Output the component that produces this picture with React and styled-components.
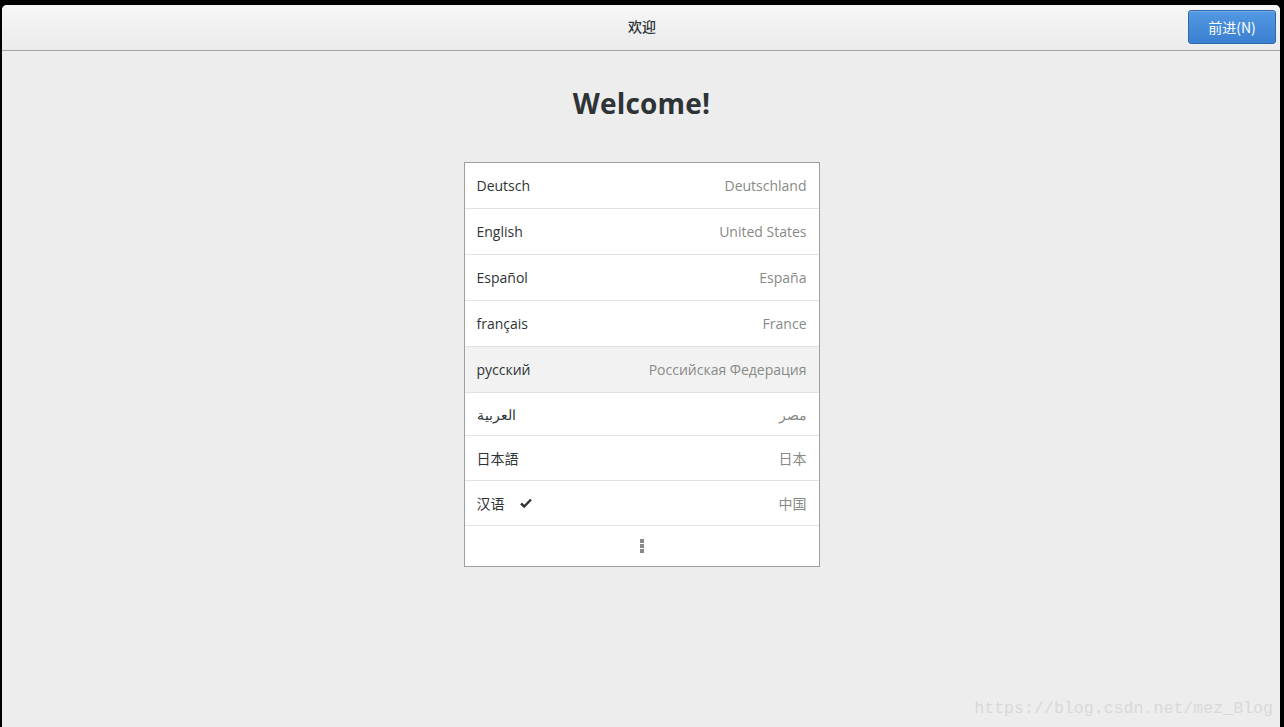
import React from "react";
import styled, { createGlobalStyle } from "styled-components";

const GlobalStyle = createGlobalStyle`
  html, body {
    margin: 0;
    padding: 0;
    background: #000;
  }
  body {
    font-family: "Open Sans", "Noto Sans", "Noto Sans CJK SC", sans-serif;
  }
`;

const Screen = styled.div`
  width: 1284px;
  height: 727px;
  background: #000;
  padding: 5px 4px 0 2px;
  box-sizing: border-box;
  overflow: hidden;
  position: relative;
`;

const Window = styled.div`
  height: 100%;
  background: #ededed;
  border-radius: 5px 5px 0 0;
  display: flex;
  flex-direction: column;
  overflow: hidden;
`;

const HeaderBar = styled.div`
  height: 45px;
  flex: none;
  background: linear-gradient(to bottom, #f7f7f7, #ebebeb);
  border-bottom: 1px solid #a6a6a6;
  display: grid;
  grid-template-columns: 1fr auto 1fr;
  align-items: center;
  padding: 0 4px 0 6px;
`;

const Title = styled.div`
  grid-column: 2;
  font-family: "Noto Sans CJK SC", sans-serif;
  font-size: 14px;
  font-weight: 500;
  color: #2e3436;
  margin-bottom: 3px;
`;

const NextButton = styled.button`
  grid-column: 3;
  justify-self: end;
  width: 88px;
  height: 34px;
  margin-bottom: 1px;
  border: 1px solid #2a68b0;
  border-radius: 3px;
  background: linear-gradient(to bottom, #5298e2, #3b80d0);
  color: #fff;
  font-family: "Noto Sans CJK SC", sans-serif;
  font-size: 14px;
  box-shadow: inset 0 1px 0 rgba(255, 255, 255, 0.2);
  padding: 0;
`;

const Body = styled.div`
  flex: 1;
  display: flex;
  flex-direction: column;
  align-items: center;
`;

const Heading = styled.h1`
  margin: 34px 0 0;
  height: 36px;
  line-height: 36px;
  font-family: "Open Sans", sans-serif;
  font-size: 28px;
  font-weight: 700;
  color: #2e3436;
  letter-spacing: 0.2px;
  padding-left: 1px;
`;

const LangList = styled.div`
  margin-top: 41px;
  width: 354px;
  background: #fff;
  border: 1px solid #9f9f9f;
  margin-left: 1px;
`;

const Row = styled.div`
  height: ${(p) => p.h}px;
  display: flex;
  align-items: center;
  justify-content: space-between;
  padding: 0 12px;
  border-bottom: 1px solid #e2e2e2;
  background: ${(p) => (p.hover ? "#f2f2f2" : "#fff")};
  font-size: 14px;
`;

const Name = styled.span`
  color: #2e3436;
  display: flex;
  align-items: center;
  gap: 15px;
`;

const Region = styled.span`
  color: #888a85;
`;

const MoreRow = styled.div`
  height: 40px;
  display: flex;
  align-items: center;
  justify-content: center;
`;

const Dots = styled.div`
  display: flex;
  flex-direction: column;
  gap: 1px;
  span {
    width: 4px;
    height: 4px;
    background: #888a85;
  }
`;

const Watermark = styled.div`
  position: absolute;
  right: 11px;
  bottom: 9px;
  font-family: "Liberation Mono", monospace;
  font-size: 16.6px;
  color: #d9d9d9;
`;

const Check = () => (
  <svg width="12" height="10" viewBox="0 0 12 10">
    <path d="M1 5.5 L4.2 8.5 L11 1.5" stroke="#2e3436" strokeWidth="2.4" fill="none" />
  </svg>
);

const langs = [
  { name: "Deutsch", region: "Deutschland", h: 45 },
  { name: "English", region: "United States", h: 45 },
  { name: "Español", region: "España", h: 45 },
  { name: "français", region: "France", h: 45 },
  { name: "русский", region: "Российская Федерация", h: 45, hover: true },
  { name: "العربية", region: "مصر", h: 42 },
  { name: "日本語", region: "日本", h: 44 },
  { name: "汉语", region: "中国", h: 44, checked: true },
];

export default function App() {
  return (
    <>
      <GlobalStyle />
      <Screen>
        <Window>
          <HeaderBar>
            <Title>欢迎</Title>
            <NextButton>前进(N)</NextButton>
          </HeaderBar>
          <Body>
            <Heading>Welcome!</Heading>
            <LangList>
              {langs.map((l) => (
                <Row key={l.name} h={l.h} hover={l.hover}>
                  <Name>
                    {l.name}
                    {l.checked && <Check />}
                  </Name>
                  <Region>{l.region}</Region>
                </Row>
              ))}
              <MoreRow>
                <Dots>
                  <span />
                  <span />
                  <span />
                </Dots>
              </MoreRow>
            </LangList>
          </Body>
        </Window>
        <Watermark>https://blog.csdn.net/mez_Blog</Watermark>
      </Screen>
    </>
  );
}
